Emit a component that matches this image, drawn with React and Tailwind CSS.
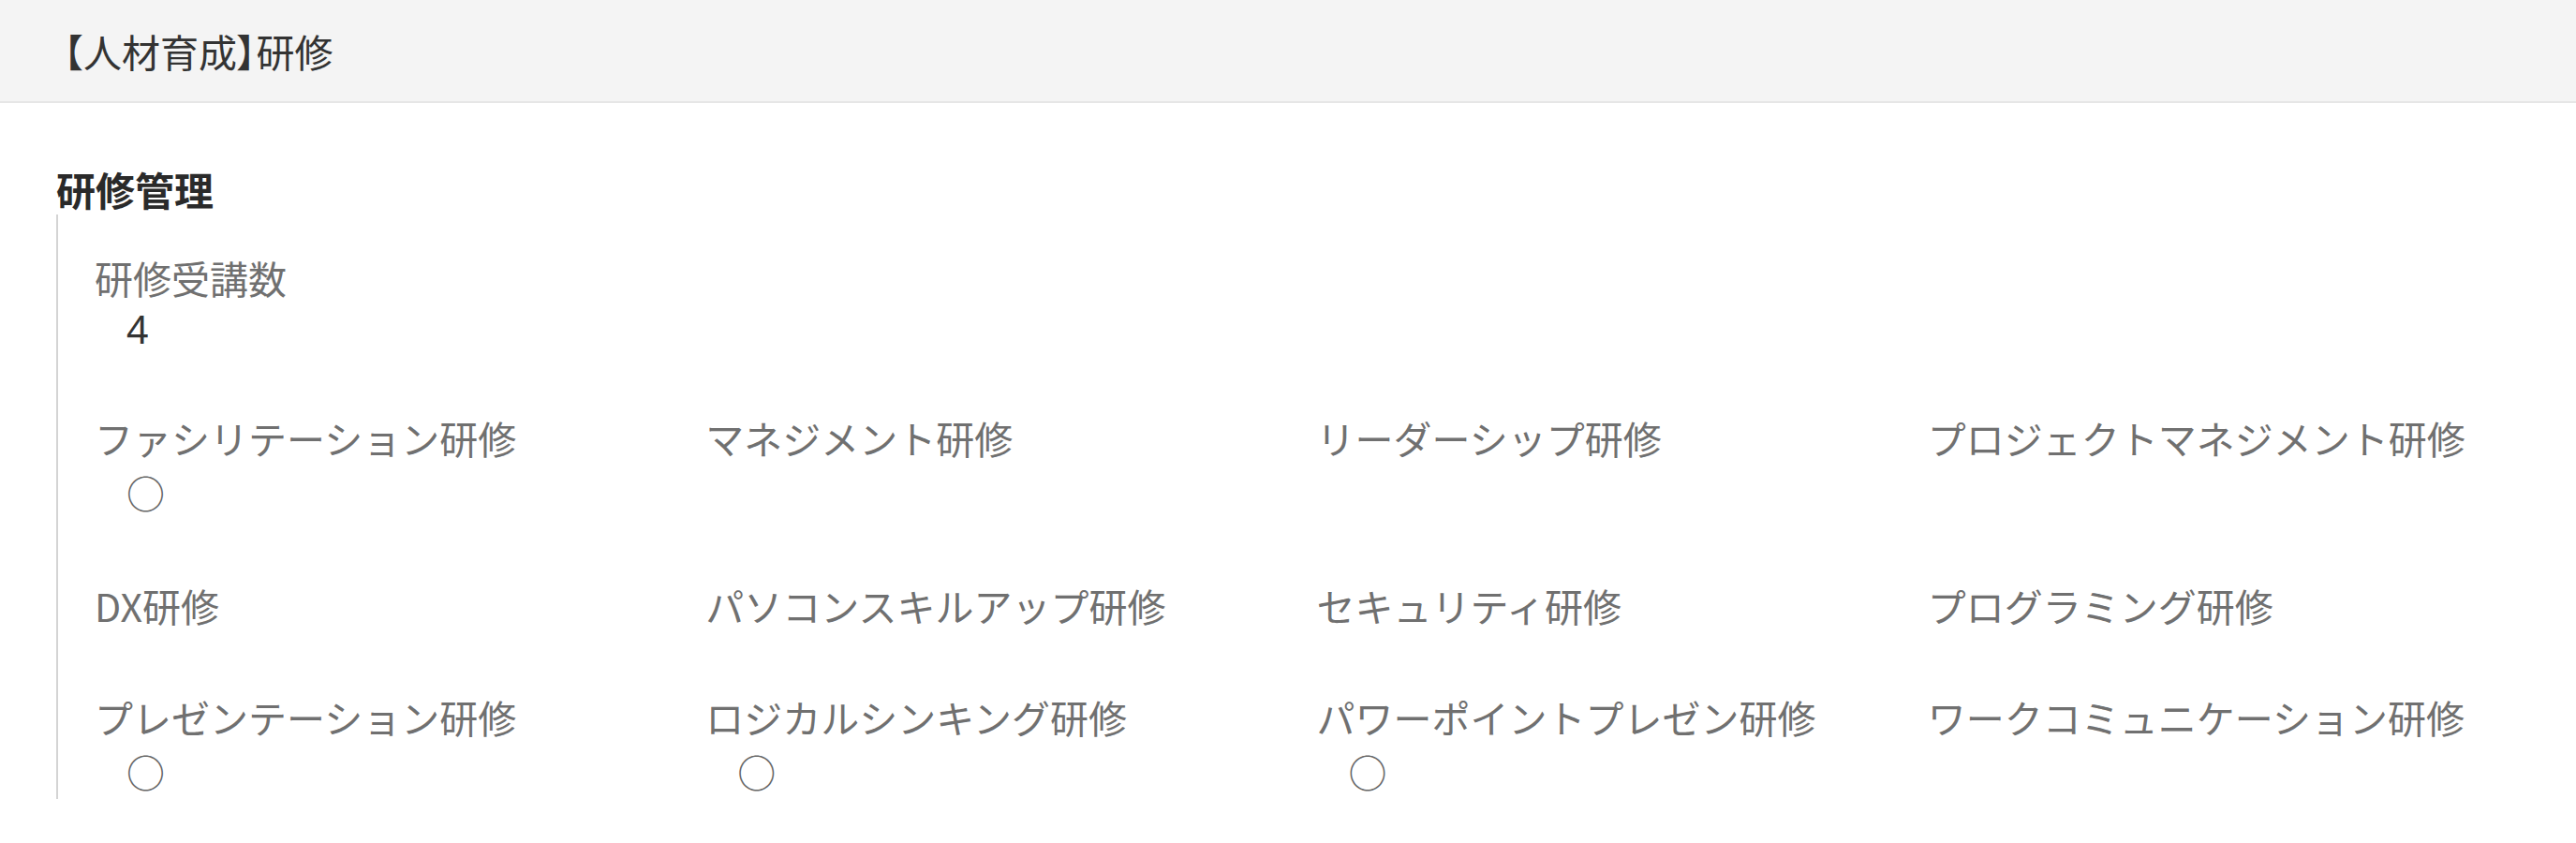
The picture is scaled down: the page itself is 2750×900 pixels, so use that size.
import React from "react";

const trainings = [
  { name: "ファシリテーション研修", done: true },
  { name: "マネジメント研修", done: false },
  { name: "リーダーシップ研修", done: false },
  { name: "プロジェクトマネジメント研修", done: false },
  { name: "DX研修", done: false },
  { name: "パソコンスキルアップ研修", done: false },
  { name: "セキュリティ研修", done: false },
  { name: "プログラミング研修", done: false },
  { name: "プレゼンテーション研修", done: true },
  { name: "ロジカルシンキング研修", done: true },
  { name: "パワーポイントプレゼン研修", done: true },
  { name: "ワークコミュニケーション研修", done: false },
];

const font = "font-['Noto_Sans_CJK_JP','Noto_Sans',sans-serif]";

const Field = ({ label, children, valueClass }) => (
  <div>
    <div className="h-[56px] leading-[56px] text-[41px] text-[#707070] whitespace-nowrap">
      {label}
    </div>
    {children != null && (
      <div className={`pl-[34px] text-[41px] ${valueClass}`}>{children}</div>
    )}
  </div>
);

export default function App() {
  return (
    <div className={`min-h-screen bg-white ${font}`}>
      {/* Header */}
      <div className="h-[110px] bg-[#f4f4f4] border-b-2 border-[#e6e6e6] flex items-center pl-[48px]">
        <h1 className="text-[41px] text-[#333] leading-none">
          【人材育成<span className="[font-feature-settings:'palt']">】</span>研修
        </h1>
      </div>

      {/* Section */}
      <div className="pl-[60px] pr-[40px] pt-[67px]">
        <h2 className="h-[50px] leading-[50px] text-[42px] font-bold text-[#2a2a2a] mb-[2px]">
          研修管理
        </h2>

        <div className="border-l-2 border-[#d4d4d4] pl-[39px] pt-[39px]">
          <div className="mb-[61px]">
            <Field
              label="研修受講数"
              valueClass="h-[54px] leading-[54px] text-[#333] font-['Noto_Sans',sans-serif]"
            >
              4
            </Field>
          </div>

          <div className="grid grid-cols-4 gap-y-[63px]">
            {trainings.map((t) => (
              <Field
                key={t.name}
                label={t.name}
                valueClass="h-[60px] leading-[60px] text-[#666]"
              >
                {t.done ? "○" : null}
              </Field>
            ))}
          </div>
        </div>
      </div>
    </div>
  );
}
